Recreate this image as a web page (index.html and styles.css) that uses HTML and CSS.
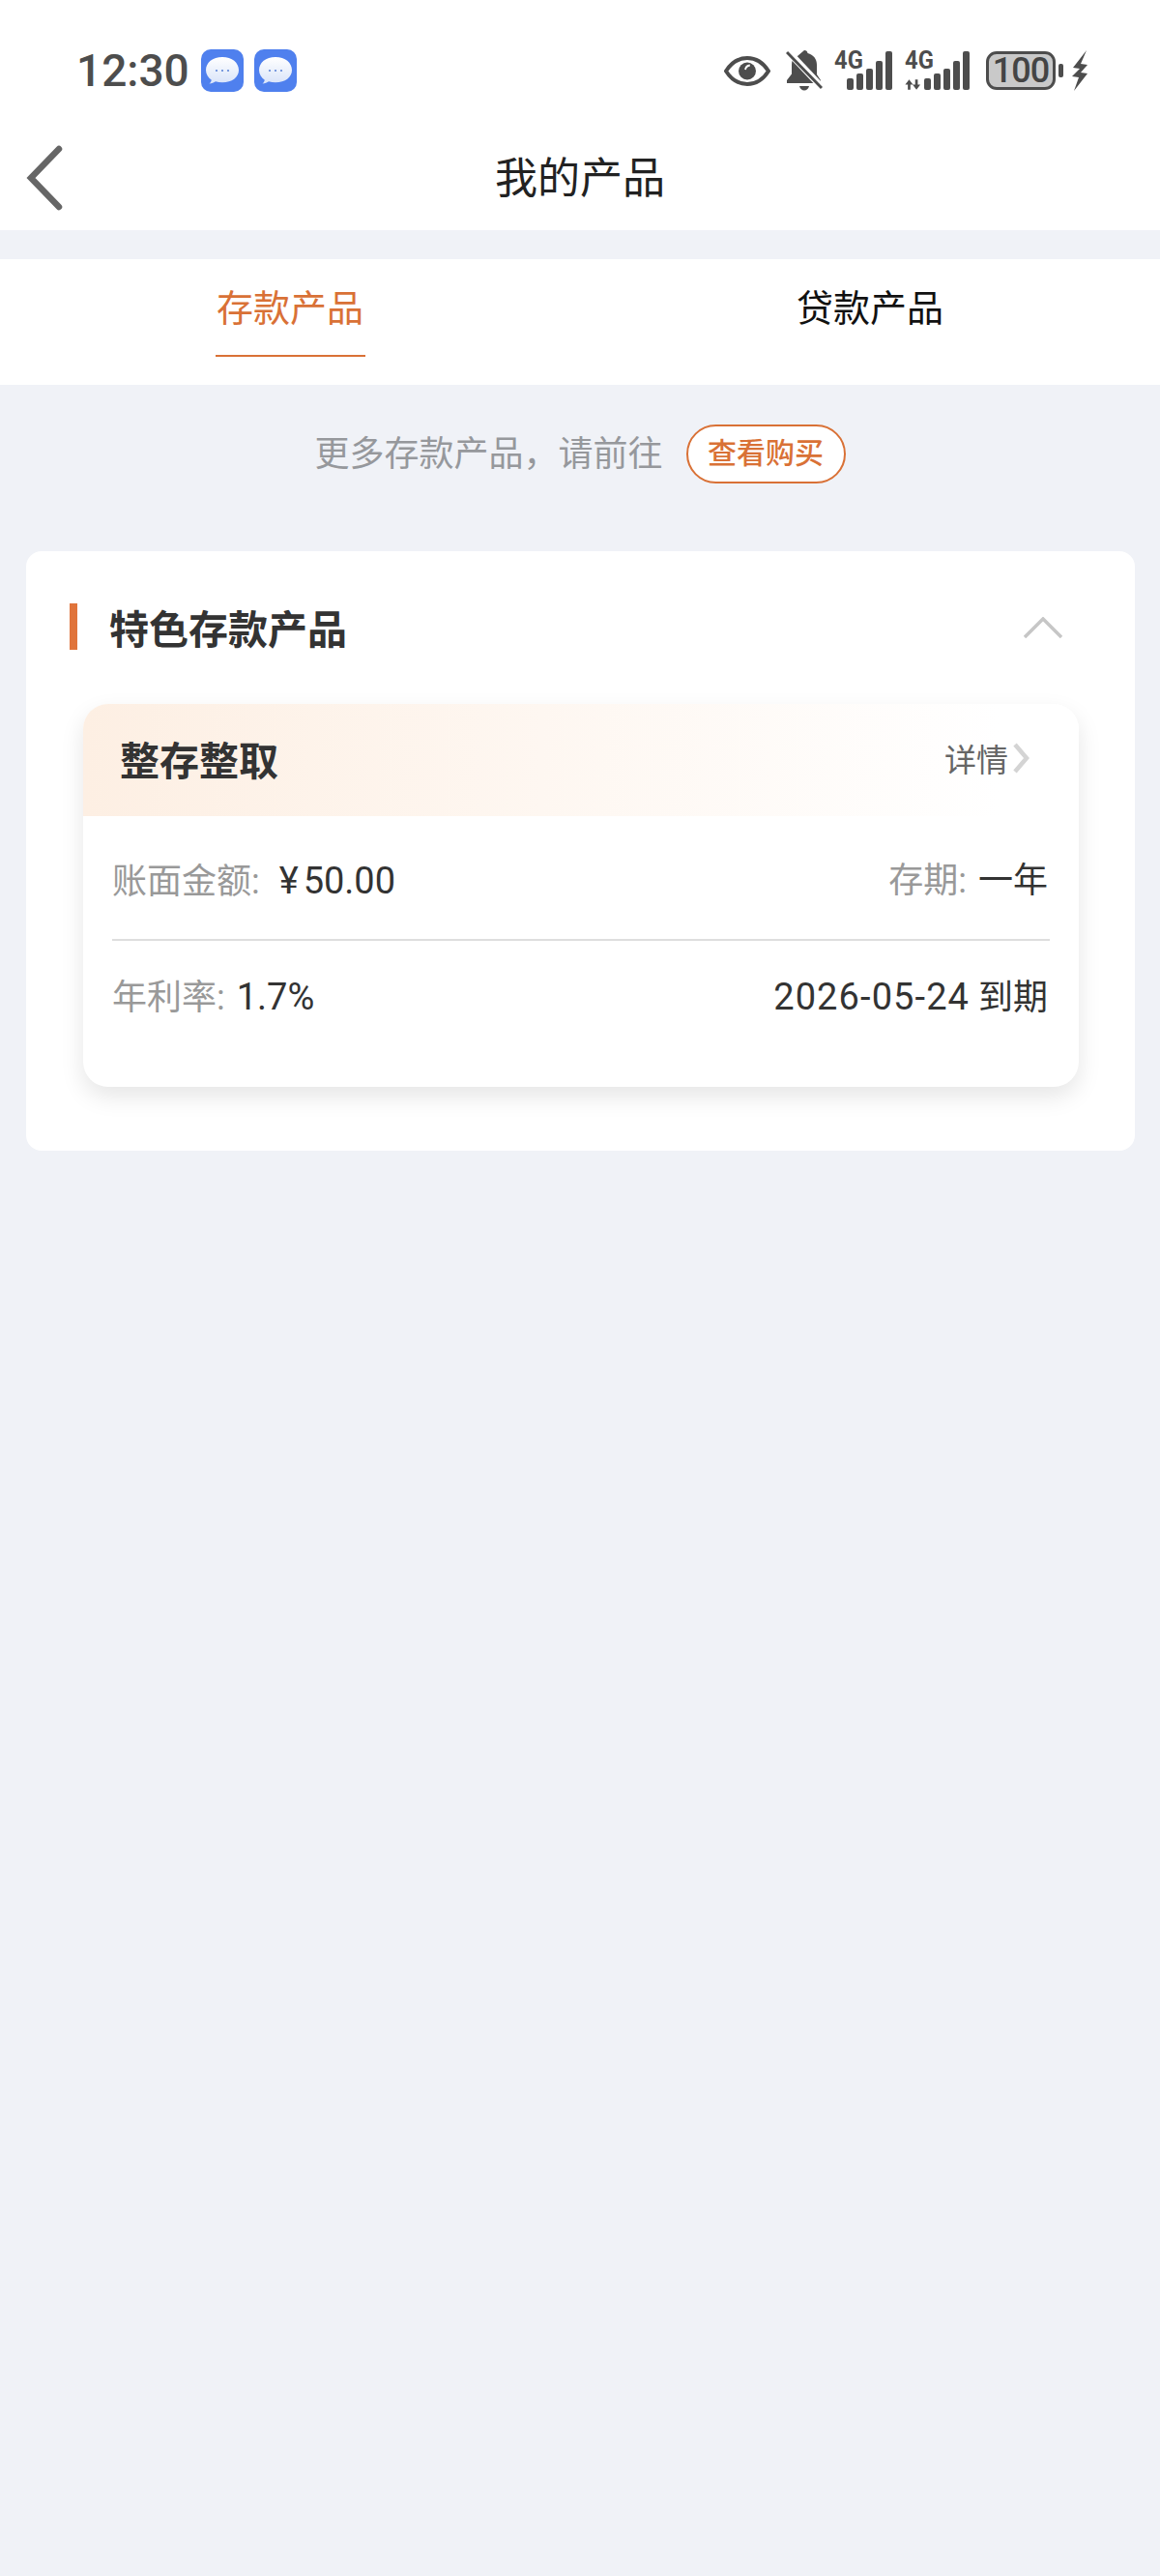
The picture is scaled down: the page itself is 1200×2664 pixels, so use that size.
FILE: index.html
```html
<!DOCTYPE html>
<html lang="zh-CN">
<head>
  <meta charset="UTF-8" />
  <title>我的产品</title>
  <link rel="stylesheet" href="styles.css">
</head>
<body>
  <div class="status-bar">
    <div class="status-left">
      <span class="time">12:30</span>
      <svg class="msg-icon" viewBox="0 0 44 44"><defs><linearGradient id="bubble" x1="0" y1="0" x2="0" y2="1"><stop offset="0" stop-color="#fff"/><stop offset="1" stop-color="#d9e4f9"/></linearGradient></defs><rect width="44" height="44" rx="10" fill="#4f80ee"/><path d="M22 8c-10 0-17 5.800-17 13.500 0 4.300 2.300 7.800 5.800 10.200-.3 1.300-1 2.600-2.300 3.800 2.600-.1 4.800-1 6.500-2.200 2.100.7 4.500 1 7 1 10 0 17-5.500 17-12.800C39 13.800 32 8 22 8z" fill="url(#bubble)"/><circle cx="16" cy="22" r="1.100" fill="#5f86d8"/><circle cx="22" cy="22" r="1.100" fill="#5f86d8"/><circle cx="28" cy="22" r="1.100" fill="#5f86d8"/></svg>
      <svg class="msg-icon" viewBox="0 0 44 44"><rect width="44" height="44" rx="10" fill="#4f80ee"/><path d="M22 8c-10 0-17 5.800-17 13.500 0 4.300 2.300 7.800 5.800 10.200-.3 1.300-1 2.600-2.300 3.800 2.600-.1 4.800-1 6.500-2.200 2.100.7 4.500 1 7 1 10 0 17-5.500 17-12.800C39 13.800 32 8 22 8z" fill="url(#bubble)"/><circle cx="16" cy="22" r="1.100" fill="#5f86d8"/><circle cx="22" cy="22" r="1.100" fill="#5f86d8"/><circle cx="28" cy="22" r="1.100" fill="#5f86d8"/></svg>
    </div>
    <div class="status-right">
      <svg class="ic-eye" viewBox="0 0 48 31"><path d="M2 15.500C8 6 15.500 2 24 2s16 4 22 13.500C40 25 32.500 29 24 29S8 25 2 15.500z" fill="none" stroke="#4d4d4d" stroke-width="4"/><circle cx="24" cy="15.500" r="9" fill="#4d4d4d"/><path d="M22 14c.4-2.500 2.200-4.200 4.800-4.500" fill="none" stroke="#fff" stroke-width="1.800"/></svg>
      <svg class="ic-bell" viewBox="0 0 38 42"><path d="M19 0c2 0 3.300 1.300 3.500 3 6 1.600 9.500 6 9.500 12v10l4 6v3H1v-3l5-6.500V15c0-1.600.2-3 .7-4.400z" fill="#4d4d4d"/><path d="M14 37h10c-.7 2.800-2.600 4.500-5 4.500s-4.300-1.700-5-4.500z" fill="#4d4d4d"/><path d="M2 1l36 38" stroke="#fff" stroke-width="7"/><path d="M1 2l36 37" stroke="#4d4d4d" stroke-width="3"/></svg>
      <div class="signal">
        <span class="net">4G</span>
        <div class="bars"><i class="b1"></i><i class="b2"></i><i class="b3"></i><i class="b4"></i><i class="b5"></i></div>
      </div>
      <div class="signal signal-2">
        <span class="net">4G</span>
        <svg class="arrows" viewBox="0 0 19 12"><path d="M5 0l4.500 6h-3v6h-3V6h-3zM12 0h3v6h3l-4.500 6L9 6h3z" fill="#4d4d4d"/></svg>
        <div class="bars"><i class="b1"></i><i class="b2"></i><i class="b3"></i><i class="b4"></i><i class="b5"></i></div>
      </div>
      <div class="battery"><span class="level">100</span></div>
      <i class="battery-cap"></i>
      <svg class="ic-bolt" viewBox="0 0 18 42"><path d="M16 0 2 18l7 1-8 8 7 1-5 14 14-18-7-1 7-8-7-1z" fill="#4d4d4d"/></svg>
    </div>
  </div>

  <div class="nav-bar">
    <svg class="back" viewBox="0 0 40 70"><path d="M34 5 5 35l29 30" fill="none" stroke="#666" stroke-width="6.500" stroke-linecap="round"/></svg>
    <h1>我的产品</h1>
  </div>

  <div class="tabs">
    <div class="tab active"><span>存款产品</span></div>
    <div class="tab"><span>贷款产品</span></div>
  </div>

  <div class="more">
    <span>更多存款产品，请前往</span>
    <a class="buy">查看购买</a>
  </div>

  <div class="panel">
    <div class="panel-head">
      <i class="mark"></i>
      <h2>特色存款产品</h2>
      <svg class="fold" viewBox="0 0 40 22"><path d="M1 21 20 2l19 19" fill="none" stroke="#c6c6c6" stroke-width="3.500"/></svg>
    </div>
    <div class="product">
      <div class="product-head">
        <h3>整存整取</h3>
        <div class="detail">详情<svg viewBox="0 0 19 34"><path d="M3 3l12 14L3 31" fill="none" stroke="#d4d4d4" stroke-width="4.500"/></svg></div>
      </div>
      <div class="row row-line">
        <div><span class="lbl">账面金额:</span> <span class="num yen">¥</span><span class="num">50.00</span></div>
        <div class="right"><span class="lbl">存期:</span> <span class="term">一年</span></div>
      </div>
      <div class="row">
        <div><span class="lbl">年利率:</span> <span class="num rate">1.7%</span></div>
        <div class="right"><span class="num date">2026-05-24</span> 到期</div>
      </div>
    </div>
  </div>
</body>
</html>
```

FILE: styles.css
```css
* {
  box-sizing: border-box;
}
body {
  margin: 0;
  height: 2664px;
  overflow: hidden;
  background-color: #f0f2f7;
  font-family: "Roboto", "Noto Sans CJK SC", sans-serif;
}
h1, h2, h3 {
  margin: 0;
}

/* status bar */
.status-bar {
  height: 130px;
  padding: 16px 74px 0 79px;
  background-color: #fff;
  display: flex;
  justify-content: space-between;
  align-items: center;
}
.status-left {
  display: flex;
  align-items: center;
}
.time {
  font-size: 46px;
  font-weight: 500;
  color: #4d4d4d;
  margin-right: 12px;
}
.msg-icon {
  width: 44px;
  height: 44px;
  margin-right: 11px;
}
.status-right {
  display: flex;
  align-items: center;
}
.ic-eye {
  width: 48px;
  height: 31px;
  margin-right: 16px;
}
.ic-bell {
  width: 38px;
  height: 42px;
  margin-right: 12px;
}
.signal {
  position: relative;
  width: 60px;
  height: 40px;
  margin-right: 13px;
}
.net {
  position: absolute;
  left: 0;
  top: -3px;
  font-size: 25px;
  line-height: 26px;
  font-weight: 700;
  color: #4d4d4d;
  transform: scaleX(0.95);
  transform-origin: left;
}
.bars {
  position: absolute;
  right: 0;
  bottom: 0;
  display: flex;
  align-items: flex-end;
  gap: 3px;
}
.bars i {
  display: block;
  width: 7px;
  background-color: #4d4d4d;
  border-radius: 2px;
}
.b1 { height: 12px; }
.b2 { height: 17px; }
.b3 { height: 22px; }
.b4 { height: 30px; }
.b5 { height: 40px; }
.signal-2 {
  margin-right: 17px;
  width: 67px;
}
.arrows {
  position: absolute;
  left: 0;
  bottom: 0;
  width: 17px;
  height: 11px;
}
.battery {
  width: 72px;
  height: 40px;
  background-color: #c9c9c9;
  border: 3px solid #4d4d4d;
  border-radius: 11px;
  display: flex;
  align-items: center;
  justify-content: center;
}
.level {
  font-size: 36px;
  line-height: 34px;
  font-weight: 500;
  letter-spacing: -1px;
  color: #444;
}
.battery-cap {
  display: block;
  width: 5px;
  height: 14px;
  margin: 0 8px 0 3px;
  background-color: #4d4d4d;
  border-radius: 2px;
}
.ic-bolt {
  width: 18px;
  height: 42px;
}

/* title */
.nav-bar {
  position: relative;
  height: 108px;
  background-color: #fff;
  display: flex;
  justify-content: center;
  align-items: center;
}
.nav-bar h1 {
  font-size: 44px;
  font-weight: 400;
  color: #222;
  margin-top: -6px;
}
.back {
  position: absolute;
  left: 27px;
  top: 19px;
  width: 40px;
  height: 70px;
}

/* tabs */
.tabs {
  display: flex;
  height: 130px;
  margin-top: 30px;
  background-color: #fff;
}
.tab {
  flex: 1;
  display: flex;
  justify-content: center;
  color: #111;
  font-size: 38px;
}
.tab span {
  display: block;
  width: 155px;
  height: 101px;
  padding-top: 21px;
  line-height: 60px;
  text-align: center;
  white-space: nowrap;
}
.tab.active {
  color: #d97136;
}
.tab.active span {
  border-bottom: 2px solid #d97136;
}

/* link to shop */
.more {
  height: 172px;
  padding-bottom: 36px;
  display: flex;
  justify-content: center;
  align-items: center;
  font-size: 36px;
  color: #96989c;
}
.buy {
  width: 165px;
  height: 61px;
  margin: 6px 0 0 24px;
  border: 2px solid #d97136;
  border-radius: 31px;
  background-color: #fff;
  color: #d97136;
  font-size: 30px;
  font-weight: 500;
  line-height: 55px;
  text-align: center;
}

/* product panel */
.panel {
  margin: 0 26px 0 27px;
  height: 620px;
  padding-top: 54px;
  background-color: #fff;
  border-radius: 16px;
}
.panel-head {
  position: relative;
  height: 104px;
  padding-left: 45px;
  display: flex;
  align-items: flex-start;
}
.mark {
  position: absolute;
  left: 45px;
  top: 0;
  width: 8px;
  height: 48px;
  background-color: #e0743b;
}
.panel-head h2 {
  margin-left: 41px;
  font-size: 41px;
  font-weight: 700;
  line-height: 56px;
  color: #333;
}
.fold {
  position: absolute;
  right: 75px;
  top: 14px;
  width: 40px;
  height: 22px;
}
.product {
  margin: 0 58px 0 59px;
  height: 396px;
  background-color: #fff;
  border-radius: 26px;
  overflow: hidden;
  box-shadow: 0 10px 24px rgba(0, 0, 0, 0.1);
}
.product-head {
  height: 116px;
  padding: 0 50px 4px 38px;
  background: linear-gradient(90deg, #fdefe3 0%, #fff 92%);
  display: flex;
  justify-content: space-between;
  align-items: center;
}
.product-head h3 {
  font-size: 41px;
  font-weight: 700;
  color: #333;
}
.detail {
  display: flex;
  align-items: center;
  font-size: 33px;
  color: #666;
}
.detail svg {
  width: 19px;
  height: 34px;
  margin-left: 4px;
}
.row {
  margin: 0 30px;
  display: flex;
  justify-content: space-between;
  height: 122px;
  padding-top: 36px;
  line-height: 44px;
  font-size: 36px;
  color: #333;
}
.row-line {
  height: 129px;
  padding-top: 45px;
  border-bottom: 2px solid #dedede;
}
.right {
  padding-right: 2px;
}
.lbl {
  color: #999;
}
.num {
  font-size: 38px;
}
.yen {
  margin: 0 5px 0 11px;
}
.rate {
  margin-left: 3px;
}
.term {
  margin-left: 3px;
}
.date {
  letter-spacing: 1.1px;
}
```
